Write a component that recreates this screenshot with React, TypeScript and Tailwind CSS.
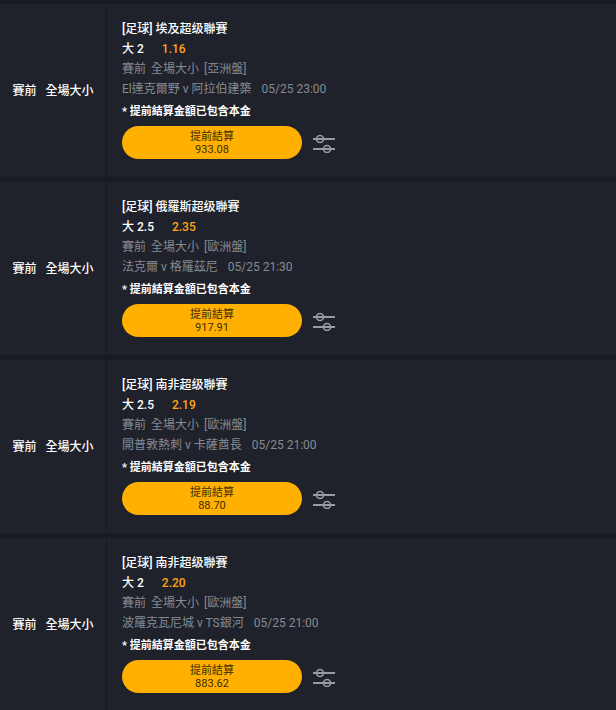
import React from 'react';

type Bet = {
  league: string;
  pick: string;
  odds: string;
  market: string;
  match: string;
  time: string;
  amount: string;
};

const bets: Bet[] = [
  { league: '[足球] 埃及超级聯賽', pick: '大 2', odds: '1.16', market: '賽前 全場大小 [亞洲盤]', match: 'El達克爾野 v 阿拉伯建築', time: '05/25 23:00', amount: '933.08' },
  { league: '[足球] 俄羅斯超级聯賽', pick: '大 2.5', odds: '2.35', market: '賽前 全場大小 [歐洲盤]', match: '法克爾 v 格羅茲尼', time: '05/25 21:30', amount: '917.91' },
  { league: '[足球] 南非超级聯賽', pick: '大 2.5', odds: '2.19', market: '賽前 全場大小 [歐洲盤]', match: '開普敦熱刺 v 卡薩酋長', time: '05/25 21:00', amount: '88.70' },
  { league: '[足球] 南非超级聯賽', pick: '大 2', odds: '2.20', market: '賽前 全場大小 [歐洲盤]', match: '波羅克瓦尼城 v TS銀河', time: '05/25 21:00', amount: '883.62' },
];

const SlidersIcon = () => (
  <svg width="24" height="20" viewBox="0 0 24 20" fill="none" stroke="#9b9ca0" strokeWidth="2">
    <line x1="1" y1="6" x2="23" y2="6" />
    <circle cx="8" cy="6" r="3.5" strokeWidth="1.6" />
    <line x1="1" y1="16" x2="23" y2="16" />
    <circle cx="15" cy="16" r="3.5" strokeWidth="1.6" />
  </svg>
);

const BetRow: React.FC<{ bet: Bet }> = ({ bet }) => (
  <div className="flex bg-[#1f222a]">
    <div className="w-[107px] shrink-0 flex items-center justify-center text-[12px] text-white font-medium border-r border-[#17191e]">
      <span className="mr-[9px]">賽前</span>
      <span>全場大小</span>
    </div>
    <div className="flex-1 pl-[15px] pt-[15px] pb-[18px]">
      <div className="text-[12px] leading-[20px] text-white font-medium">{bet.league}</div>
      <div className="text-[12px] leading-[20px] flex font-medium">
        <span className="text-white">{bet.pick}</span>
        <span className="ml-[18px] text-[#ffa517]">{bet.odds}</span>
      </div>
      <div className="text-[12px] leading-[20px] text-[#878a91] [word-spacing:2px]">{bet.market}</div>
      <div className="text-[12px] leading-[20px] text-[#878a91]">
        {bet.match}
        <span className="ml-[10px]">{bet.time}</span>
      </div>
      <div className="mt-[3px] text-[11px] leading-[20px] text-white font-bold">* 提前結算金額已包含本金</div>
      <div className="mt-[4px] flex items-center">
        <button className="w-[180px] h-[33px] rounded-full bg-[#ffb000] flex flex-col items-center justify-center pt-[1px] text-[11px] leading-[13px] text-[#3d2d06]">
          <span>提前結算</span>
          <span>{bet.amount}</span>
        </button>
        <div className="ml-[10px] mt-[1px]">
          <SlidersIcon />
        </div>
      </div>
    </div>
  </div>
);

export default function App() {
  return (
    <div
      className="min-h-[710px] bg-[#191b21] pt-[4px] flex flex-col gap-[5px]"
      style={{ fontFamily: 'Roboto, "Noto Sans CJK TC", sans-serif' }}
    >
      {bets.map((bet, i) => (
        <BetRow key={i} bet={bet} />
      ))}
    </div>
  );
}
